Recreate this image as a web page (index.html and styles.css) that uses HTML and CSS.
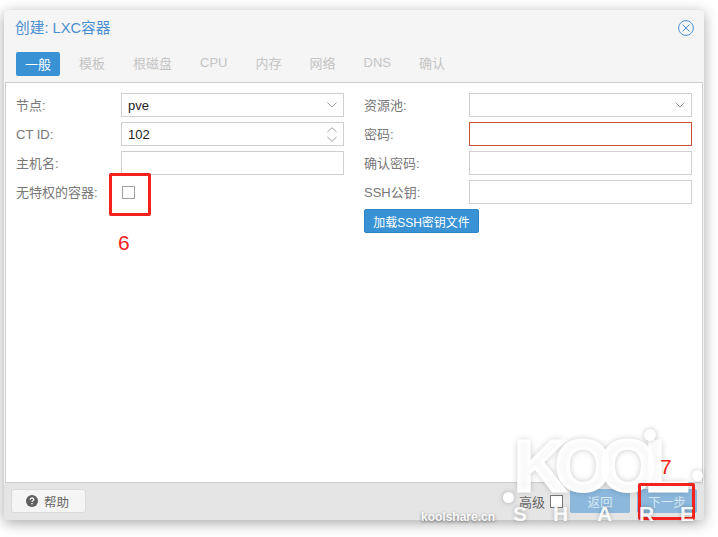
FILE: index.html
```html
<!DOCTYPE html>
<html lang="zh">
<head>
<meta charset="utf-8">
<title>创建: LXC容器</title>
<link rel="stylesheet" href="styles.css">
</head>
<body>
<div class="window">
  <header class="title-bar">
    <span class="title">创建: LXC容器</span>
    <svg class="close" width="16" height="16" viewBox="0 0 16 16"><circle cx="8" cy="8" r="7.4" fill="none" stroke="#4a90d0" stroke-width="1"/><path d="M4.6 4.6l6.8 6.8M11.400 4.600l-6.800 6.800" stroke="#4a90d0" stroke-width="1" fill="none"/></svg>
  </header>
  <nav class="tabs">
    <span class="tab active">一般</span>
    <span class="tab">模板</span>
    <span class="tab">根磁盘</span>
    <span class="tab">CPU</span>
    <span class="tab">内存</span>
    <span class="tab">网络</span>
    <span class="tab">DNS</span>
    <span class="tab">确认</span>
  </nav>
  <main class="panel">
    <div class="column">
      <div class="row"><label class="label">节点:</label><div class="field"><span class="value">pve</span><svg class="chev" width="10" height="6" viewBox="0 0 10 6"><path d="M.5.5L5 5 9.500.5" fill="none" stroke="#a0a0a0"/></svg></div></div>
      <div class="row"><label class="label">CT ID:</label><div class="field"><span class="value">102</span><svg class="chev" width="10" height="15" viewBox="0 0 10 15"><path d="M.5 5L5 .7 9.500 5M.5 10L5 14.300 9.500 10" fill="none" stroke="#a0a0a0"/></svg></div></div>
      <div class="row"><label class="label">主机名:</label><div class="field"></div></div>
      <div class="row"><label class="label">无特权的容器:</label><div class="check-wrap"><span class="check"></span></div></div>
    </div>
    <div class="column">
      <div class="row"><label class="label">资源池:</label><div class="field"><svg class="chev" width="10" height="6" viewBox="0 0 10 6"><path d="M.5.5L5 5 9.500.5" fill="none" stroke="#a0a0a0"/></svg></div></div>
      <div class="row"><label class="label">密码:</label><div class="field invalid"></div></div>
      <div class="row"><label class="label">确认密码:</label><div class="field"></div></div>
      <div class="row"><label class="label">SSH公钥:</label><div class="field"></div></div>
      <button class="primary load">加载SSH密钥文件</button>
    </div>
  </main>
  <footer class="footer">
    <button class="help"><svg width="12" height="12" viewBox="0 0 12 12"><circle cx="6" cy="6" r="6" fill="#5f5f5f"/><path d="M4.200 4.700C4.200 3.500 5 3 6 3s1.800.6 1.800 1.500c0 1.300-1.800 1.300-1.800 2.500" fill="none" stroke="#f5f5f5" stroke-width="1.300"/><rect x="5.300" y="8" width="1.400" height="1.400" fill="#f5f5f5"/></svg>帮助</button>
    <div class="footer-right">
      <span class="adv">高级</span><span class="adv-check"></span>
      <button class="primary nav">返回</button>
      <button class="primary nav">下一步</button>
    </div>
  </footer>
</div>

<div class="wm">
  <span class="wm-kool">KOOL</span>
  <span class="wm-dot d1"></span>
  <span class="wm-dot d2"></span>
  <span class="wm-dot d3"></span>
</div>

<div class="mark-box one"></div>
<span class="mark-num six">6</span>
<span class="mark-num seven">7</span>
<div class="mark-box two"></div>

<div class="wm">
  <span class="wm-share s1">S</span>
  <span class="wm-share s2">H</span>
  <span class="wm-share s3">A</span>
  <span class="wm-share s4">R</span>
  <span class="wm-share s5">E</span>
  <span class="wm-url">koolshare.cn</span>
</div>
</body>
</html>
```
FILE: styles.css
```css
* { box-sizing: border-box; }
html, body { margin: 0; height: 100%; }
body {
  background: #fff;
  font-family: "Liberation Sans", "Noto Sans CJK SC", sans-serif;
  font-size: 13px;
  color: #666;
  overflow: hidden;
  position: relative;
}
.window {
  margin: 10px 0 0 4px;
  width: 700px;
  height: 510px;
  background: #f5f5f5;
  border-radius: 4px;
  box-shadow: 0 3px 14px rgba(0,0,0,.35);
  display: flex;
  flex-direction: column;
  overflow: hidden;
}
.title-bar {
  height: 42px;
  padding: 0 10px 6px 11px;
  display: flex;
  justify-content: space-between;
  align-items: center;
  flex: none;
}
.title { font-size: 14.700px; color: #4a8fd0; margin-bottom: 4px; }
.tabs {
  height: 30px;
  padding: 0 0 6px 12px;
  display: flex;
  align-items: stretch;
  flex: none;
}
.tab {
  font-size: 13px;
  color: #c4c4c4;
  display: flex;
  align-items: center;
  padding: 0 14px 3px;
}
.tab.active {
  width: 44px;
  padding: 0 0 2px;
  justify-content: center;
  background: #3892d4;
  color: #fff;
  border-radius: 2px;
  margin-right: 5px;
}
.panel {
  flex: none;
  height: 401px;
  margin: 0 1px;
  background: #fff;
  border: 1px solid #cfcfcf;
  padding: 10px 10px 0 10px;
  display: flex;
  gap: 20px;
}
.column { width: 328px; display: flex; flex-direction: column; gap: 5px; }
.row { display: flex; align-items: flex-start; height: 24px; }
.label { width: 105px; line-height: 25px; flex: none; color: #787878; font-size: 13px; }
.field {
  flex: 1;
  height: 24px;
  border: 1px solid #cfcfcf;
  background: #fff;
  display: flex;
  align-items: center;
  padding: 0 6px;
}
.field.invalid { border-color: #c9523a; }
.value { color: #222; font-size: 13px; }
.chev { margin-left: auto; }
.check-wrap { height: 24px; display: flex; align-items: center; padding-left: 1px; }
.check { width: 13px; height: 13px; border: 1px solid #a0a0a0; display: block; }
.primary {
  font: inherit;
  background: #3892d4;
  border: 1px solid #2f84c4;
  border-radius: 2px;
  color: #fff;
}
.load { width: 115px; height: 24px; padding: 0; font-size: 12px; }
.footer {
  flex: 1;
  background: #e5e5e5;
  display: flex;
  align-items: center;
  justify-content: space-between;
  padding: 0 7px 1px 7px;
}
.help {
  width: 75px;
  height: 24px;
  background: #f5f5f5;
  border: 1px solid #dadada;
  border-radius: 3px;
  font: inherit;
  color: #666;
  font-size: 12.500px;
  display: flex;
  align-items: center;
  justify-content: center;
  gap: 6px;
  padding: 0 2px 0 0;
}
.footer-right { display: flex; align-items: center; }
.adv { color: #666; margin-right: 5px; }
.adv-check { width: 13px; height: 13px; border: 1px solid #777; background: #fff; margin-right: 7px; }
.nav { width: 60px; height: 24px; padding: 0; background: #8bb8dc; border-color: #8bb8dc; font-size: 12.500px; color: #d8e6f2; }
.nav + .nav { margin-left: 7px; }

/* annotations over the screenshot */
.mark-box { position: absolute; border: 3px solid #f5211c; border-radius: 2px; }
.mark-box.one { left: 109px; top: 173px; width: 42px; height: 43px; }
.mark-box.two { left: 638px; top: 483px; width: 57px; height: 37px; }
.mark-num { position: absolute; color: #f5211c; font-size: 21px; line-height: 24px; }
.six { left: 118px; top: 231px; }
.seven { left: 660px; top: 455px; }

/* watermark */
.wm { position: absolute; inset: 0; pointer-events: none; color: #fff; }
.wm-kool {
  position: absolute;
  left: 514px;
  top: 430px;
  font: bold 72px/72px "Liberation Sans", sans-serif;
  letter-spacing: -11px;
  color: rgba(255,255,255,.92);
  -webkit-text-stroke: 3px #fff;
  text-shadow: 0 0 7px rgba(0,0,0,.3);
}
.wm-dot { position: absolute; border-radius: 50%; background: #fff; box-shadow: 0 0 5px rgba(0,0,0,.25); }
.d1 { left: 644px; top: 429px; width: 12px; height: 12px; }
.d2 { left: 692px; top: 470px; width: 11px; height: 11px; }
.d3 { left: 503px; top: 492px; width: 11px; height: 11px; }
.wm-share {
  position: absolute;
  top: 502px;
  font: bold 21px/24px "Liberation Sans", sans-serif;
  color: rgba(255,255,255,.92);
  text-shadow: 0 0 4px rgba(0,0,0,.25);
}
.s1 { left: 513px; }
.s2 { left: 553px; }
.s3 { left: 597px; }
.s4 { left: 639px; }
.s5 { left: 680px; }
.wm-url {
  position: absolute;
  left: 421px;
  top: 510px;
  font: bold 12px/14px "Liberation Sans", sans-serif;
  color: rgba(255,255,255,.95);
  text-shadow: 0 1px 3px rgba(0,0,0,.5);
}
```
